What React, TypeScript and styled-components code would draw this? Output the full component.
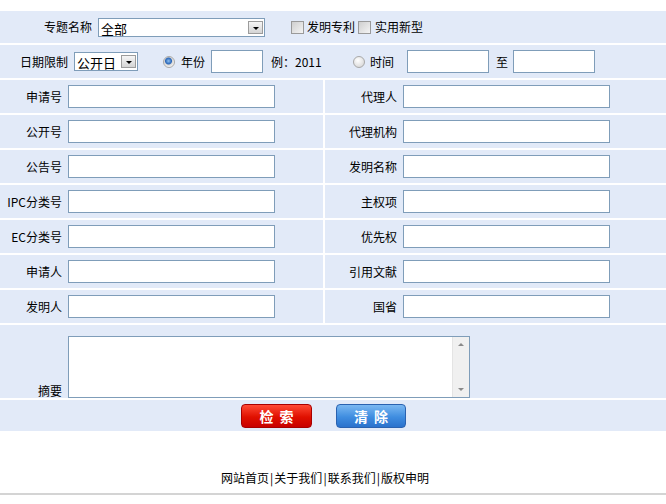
import React from "react";
import styled, { createGlobalStyle } from "styled-components";

const GlobalStyle = createGlobalStyle`
  body {
    margin: 0;
    background: #fff;
    font-family: "Noto Sans CJK SC", "Liberation Sans", sans-serif;
    font-size: 12px;
    color: #000;
  }
`;

const Page = styled.div`
  width: 666px;
  padding-top: 11px;
  display: flex;
  flex-direction: column;
  gap: 2px;
`;

const Band = styled.div<{ $h: number; $bottom?: boolean }>`
  height: ${({ $h }) => $h}px;
  background: #e2eaf8;
  display: flex;
  align-items: ${({ $bottom }) => ($bottom ? "flex-end" : "center")};
  box-sizing: border-box;
`;

const Grid = styled.div`
  display: grid;
  grid-template-columns: 323px 1fr;
  gap: 2px;
`;

const Label = styled.span<{ $w: number }>`
  width: ${({ $w }) => $w}px;
  flex: none;
  text-align: right;
  white-space: nowrap;
  margin-right: 6px;
  line-height: 14px;
`;

const Text = styled.span<{ $ml?: number; $w?: number }>`
  margin-left: ${({ $ml }) => $ml ?? 0}px;
  ${({ $w }) => ($w ? `width: ${$w}px;` : "")}
  flex: none;
  white-space: nowrap;
  line-height: 14px;
`;

const Input = styled.input<{ $w: number; $ml?: number }>`
  width: ${({ $w }) => $w}px;
  height: 23px;
  margin: 0 0 0 ${({ $ml }) => $ml ?? 0}px;
  box-sizing: border-box;
  border: 1px solid #7f9db9;
  background: #fff;
  padding: 0 3px;
  font: inherit;
  outline: none;
  flex: none;
`;

const SelectBox = styled.div<{ $w: number }>`
  width: ${({ $w }) => $w}px;
  height: 19px;
  box-sizing: border-box;
  border: 1px solid #7f9db9;
  background: #fff;
  display: flex;
  align-items: center;
  flex: none;
`;

const SelectField = styled.select`
  appearance: none;
  border: none;
  background: transparent;
  flex: 1;
  min-width: 0;
  height: 17px;
  line-height: 15px;
  padding: 0 2px;
  font: inherit;
  font-size: 13px;
  color: #000;
  outline: none;
`;

const Arrow = styled.span`
  width: 15px;
  height: 13px;
  margin-right: 1px;
  box-sizing: border-box;
  border: 1px solid #9c9c9c;
  background: linear-gradient(#f6f6f6, #d4d4d4);
  display: flex;
  align-items: center;
  justify-content: center;
  flex: none;
  &::after {
    content: "";
    border-left: 3px solid transparent;
    border-right: 3px solid transparent;
    border-top: 3px solid #000;
    margin-top: 2px;
  }
`;

const Check = styled.input.attrs({ type: "checkbox" })<{ $ml: number }>`
  appearance: none;
  width: 13px;
  height: 13px;
  margin: 0 0 0 ${({ $ml }) => $ml}px;
  box-sizing: border-box;
  border: 1px solid #9a9a9a;
  background: linear-gradient(135deg, #cfcfcf, #f4f4f4);
  flex: none;
`;

const Radio = styled.input.attrs({ type: "radio" })<{ $ml: number }>`
  appearance: none;
  width: 12px;
  height: 12px;
  margin: 0 0 0 ${({ $ml }) => $ml}px;
  border-radius: 50%;
  box-sizing: border-box;
  border: 1px solid #a8a8a8;
  background: radial-gradient(circle at 40% 35%, #fff, #d0d0d0);
  flex: none;
  &:checked {
    background: radial-gradient(circle at 45% 40%, #8ec0f0 0, #2a66b8 3px, #d8d8d8 4px, #f4f4f4 6px);
  }
`;

const MemoBox = styled.div`
  width: 402px;
  height: 62px;
  box-sizing: border-box;
  border: 1px solid #7f9db9;
  background: #fff;
  display: flex;
  flex: none;
`;

const Memo = styled.textarea`
  flex: 1;
  border: none;
  resize: none;
  overflow: hidden;
  font: inherit;
  outline: none;
  padding: 2px;
`;

const ScrollTrack = styled.div`
  width: 17px;
  background: #f0f0f0;
  border-left: 1px solid #e4e4e4;
  display: flex;
  flex-direction: column;
  justify-content: space-between;
  align-items: center;
  padding: 6px 0;
  box-sizing: border-box;
`;

const ScrollArrow = styled.span<{ $dir: "up" | "down" }>`
  width: 0;
  height: 0;
  border-left: 3px solid transparent;
  border-right: 3px solid transparent;
  ${({ $dir }) =>
    $dir === "up" ? "border-bottom: 3px solid #8a8a8a;" : "border-top: 3px solid #8a8a8a;"}
`;

const Buttons = styled(Band)`
  padding-left: 241px;
  gap: 24px;
`;

const Btn = styled.button<{ $tone: "red" | "blue" }>`
  width: ${({ $tone }) => ($tone === "red" ? 71 : 70)}px;
  height: 24px;
  border-radius: 4px;
  border: 1px solid ${({ $tone }) => ($tone === "red" ? "#a80000" : "#2a62b0")};
  background: ${({ $tone }) =>
    $tone === "red"
      ? "linear-gradient(#ff4a35, #e01000 55%, #c80000)"
      : "linear-gradient(#7ab8f2, #3f8de0 55%, #2b72cc)"};
  color: #fff;
  font-family: "Noto Sans CJK SC", sans-serif;
  font-size: 14px;
  font-weight: 700;
  letter-spacing: 6px;
  padding: 0 0 0 6px;
  line-height: 20px;
  cursor: pointer;
`;

const Footer = styled.div`
  height: 64px;
  box-sizing: border-box;
  padding: 0 16px 8px 0;
  border-bottom: 2px solid #d4d4d4;
  display: flex;
  align-items: flex-end;
  justify-content: center;
  margin-top: -2px;
  background: #fff;
`;

const Links = styled.div`
  line-height: 14px;
  font-size: 12px;
  a {
    color: #000;
    text-decoration: none;
  }
`;

const Bar = styled.span`
  margin: 0 1px;
`;

type Field = { label: string; labelWidth: number };

const leftFields: Field[] = [
  "申请号",
  "公开号",
  "公告号",
  "IPC分类号",
  "EC分类号",
  "申请人",
  "发明人",
].map((label) => ({ label, labelWidth: 62 }));

const rightFields: Field[] = [
  "代理人",
  "代理机构",
  "发明名称",
  "主权项",
  "优先权",
  "引用文献",
  "国省",
].map((label) => ({ label, labelWidth: 72 }));

const FieldCell = ({ label, labelWidth }: Field) => (
  <Band $h={33}>
    <Label $w={labelWidth}>{label}</Label>
    <Input $w={207} />
  </Band>
);

const links = ["网站首页", "关于我们", "联系我们", "版权申明"];

export default function App() {
  return (
    <>
      <GlobalStyle />
      <Page>
        <Band $h={32}>
          <Label $w={92}>专题名称</Label>
          <SelectBox $w={167}>
            <SelectField defaultValue="全部">
              <option>全部</option>
            </SelectField>
            <Arrow />
          </SelectBox>
          <Check $ml={26} />
          <Text $ml={3}>发明专利</Text>
          <Check $ml={3} />
          <Text $ml={4}>实用新型</Text>
        </Band>

        <Band $h={33}>
          <Label $w={68}>日期限制</Label>
          <SelectBox $w={64}>
            <SelectField defaultValue="公开日">
              <option>公开日</option>
            </SelectField>
            <Arrow />
          </SelectBox>
          <Radio $ml={25} name="date" defaultChecked />
          <Text $ml={6}>年份</Text>
          <Input $w={52} $ml={6} />
          <Text $ml={8} $w={82}>
            例：2011
          </Text>
          <Radio $ml={0} name="date" />
          <Text $ml={5}>时间</Text>
          <Input $w={82} $ml={13} />
          <Text $ml={7}>至</Text>
          <Input $w={82} $ml={5} />
        </Band>

        <Grid>
          {leftFields.map((f, i) => (
            <React.Fragment key={f.label}>
              <FieldCell {...f} />
              <FieldCell {...rightFields[i]} />
            </React.Fragment>
          ))}
        </Grid>

        <Band $h={73} $bottom>
          <Label $w={62}>摘要</Label>
          <MemoBox>
            <Memo />
            <ScrollTrack>
              <ScrollArrow $dir="up" />
              <ScrollArrow $dir="down" />
            </ScrollTrack>
          </MemoBox>
        </Band>

        <Buttons $h={31}>
          <Btn $tone="red">检索</Btn>
          <Btn $tone="blue">清除</Btn>
        </Buttons>

        <Footer>
          <Links>
            {links.map((l, i) => (
              <React.Fragment key={l}>
                {i > 0 && <Bar>|</Bar>}
                <a href="#">{l}</a>
              </React.Fragment>
            ))}
          </Links>
        </Footer>
      </Page>
    </>
  );
}
